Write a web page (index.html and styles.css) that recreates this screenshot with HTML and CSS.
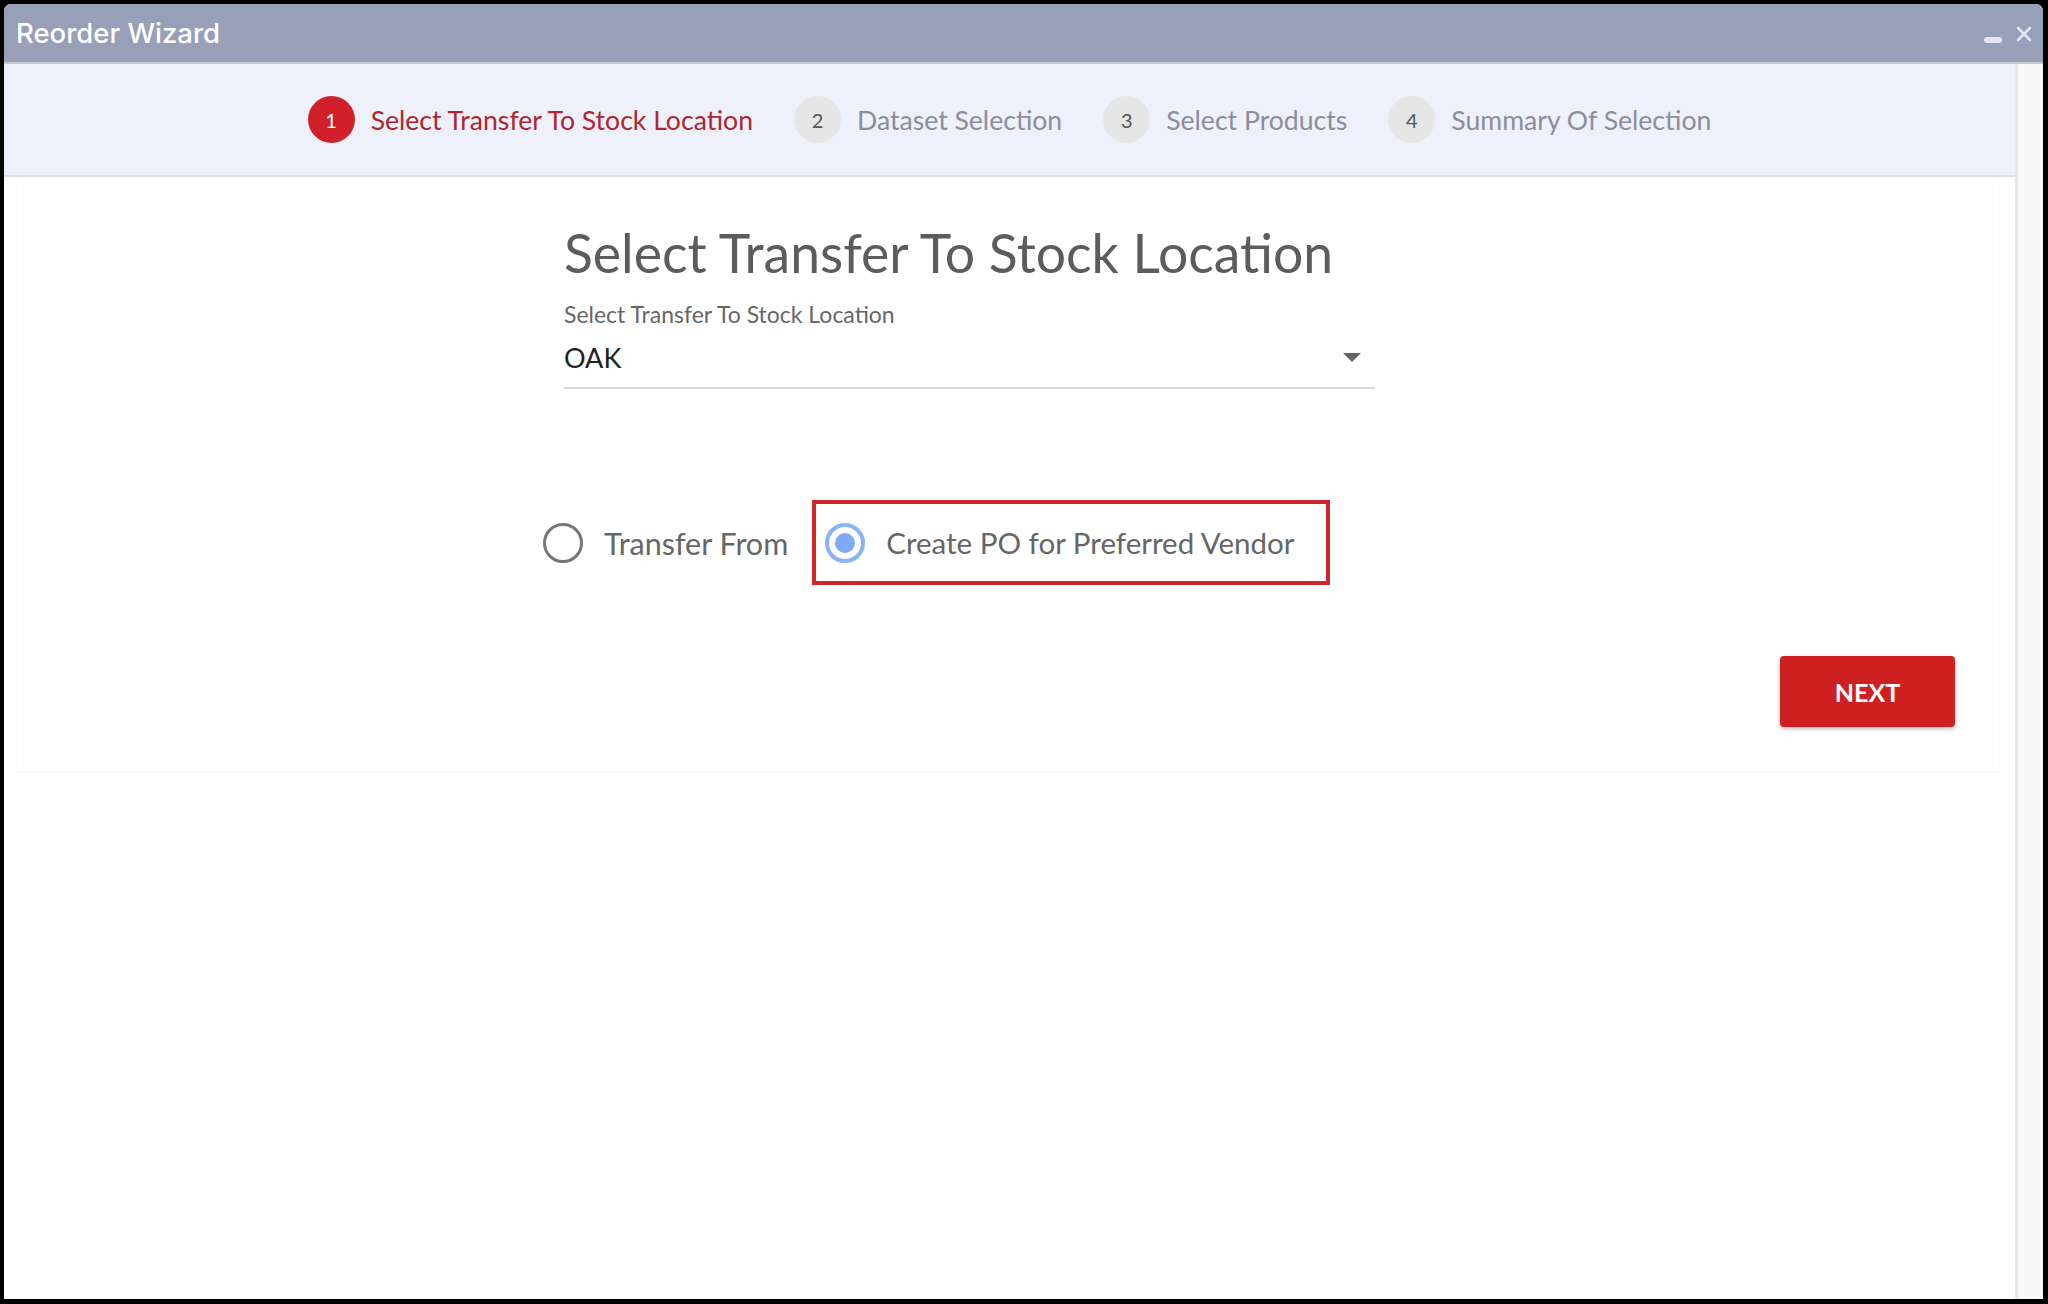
FILE: index.html
```html
<!DOCTYPE html>
<html>
<head>
<meta charset="utf-8">
<title>Reorder Wizard</title>
<link rel="stylesheet" href="styles.css">
</head>
<body>
<div class="window">
  <div class="titlebar">
    <span class="title">Reorder Wizard</span>
    <div class="controls">
      <span class="min"></span>
      <svg class="close" width="16" height="16" viewBox="0 0 16 16"><path d="M2 2 L14 14 M14 2 L2 14" stroke="#e4e7ef" stroke-width="2.6" stroke-linecap="round"/></svg>
    </div>
  </div>
  <div class="body">
    <div class="main">
      <div class="stepper">
        <div class="step active"><span class="num">1</span><span class="label">Select Transfer To Stock Location</span></div>
        <div class="step"><span class="num">2</span><span class="label">Dataset Selection</span></div>
        <div class="step"><span class="num">3</span><span class="label">Select Products</span></div>
        <div class="step"><span class="num">4</span><span class="label">Summary Of Selection</span></div>
      </div>
      <div class="card">
        <div class="form">
          <h1 class="heading">Select Transfer To Stock Location</h1>
          <div class="field-label">Select Transfer To Stock Location</div>
          <div class="select">
            <span class="value">OAK</span>
            <span class="arrow"></span>
          </div>
        </div>
        <div class="radios">
          <label class="radio"><span class="ring"></span><span class="rtext">Transfer From</span></label>
          <label class="radio checked"><span class="ring"><span class="dot"></span></span><span class="rtext">Create PO for Preferred Vendor</span></label>
        </div>
        <div class="actions">
          <button class="next">NEXT</button>
        </div>
      </div>
    </div>
    <div class="scrollbar"></div>
  </div>
</div>
</body>
</html>
```
FILE: styles.css
```css
html, body {
  margin: 0;
  padding: 0;
  background: #000;
  width: 2048px;
  height: 1304px;
  overflow: hidden;
}
body {
  padding: 4px 4px 5px 4px;
  box-sizing: border-box;
}
.window {
  width: 2039px;
  height: 1295px;
  background: #fff;
  border-radius: 7px 7px 0 0;
  overflow: hidden;
  display: flex;
  flex-direction: column;
}
.titlebar {
  height: 58px;
  background: #98a0b9;
  border-bottom: 2px solid #c6c8cf;
  display: flex;
  align-items: center;
  justify-content: space-between;
  padding: 0 11px 0 12px;
  flex: none;
}
.title {
  font-family: Inter, "Liberation Sans", sans-serif;
  font-size: 27.5px;
  font-weight: 500;
  color: #fff;
  letter-spacing: 0;
}
.controls {
  display: flex;
  align-items: center;
  gap: 14px;
  padding-top: 2px;
}
.min {
  display: block;
  width: 18px;
  height: 6px;
  border-radius: 3px;
  background: #e4e7ef;
  margin-top: 12px;
}
.close { display: block; }
.body {
  flex: 1;
  display: flex;
  min-height: 0;
}
.main {
  flex: 1;
  display: flex;
  flex-direction: column;
}
.scrollbar {
  width: 25px;
  background: #f9f9f9;
  border-left: 3px solid #e9e9e9;
  flex: none;
}
.stepper {
  height: 111px;
  background: #eef0fb;
  border-bottom: 2px solid #dcdce2;
  display: flex;
  align-items: center;
  justify-content: center;
  gap: 41px;
  font-family: Lato, "Open Sans", sans-serif;
  flex: none;
}
.step {
  display: flex;
  align-items: center;
  gap: 16px;
}
.num {
  width: 47px;
  height: 47px;
  border-radius: 50%;
  background: #e6e6e6;
  color: #555;
  display: flex;
  align-items: center;
  justify-content: center;
  font-size: 20px;
}
.label {
  font-size: 26.6px;
  color: #8b8e9a;
}
.step.active .num {
  background: #d0202a;
  color: #fff;
}
.step.active .label { color: #b0262e; }
.card {
  font-family: Lato, "Open Sans", sans-serif;
  margin: 0 16px 0 13px;
  height: 594px;
  box-shadow: 0 1px 2px rgba(0,0,0,0.04);
}
.form {
  margin-left: 547px;
  width: 811px;
  padding-top: 39px;
}
.heading {
  margin: 0;
  font-size: 53.5px;
  font-weight: 400;
  color: #5c5c5c;
  line-height: 72px;
}
.field-label {
  font-size: 23px;
  color: #666;
  margin-top: 12px;
  line-height: 28px;
}
.select {
  display: flex;
  align-items: center;
  justify-content: space-between;
  height: 59px;
  border-bottom: 2px solid #d9d9d9;
  padding-right: 14px;
}
.value {
  font-size: 27px;
  color: #222;
}
.arrow {
  width: 0;
  height: 0;
  border-left: 9px solid transparent;
  border-right: 9px solid transparent;
  border-top: 9px solid #666;
}
.radios {
  display: flex;
  align-items: center;
  margin: 111px 0 0 526px;
  gap: 24px;
}
.radio {
  display: flex;
  align-items: center;
  gap: 21px;
  height: 79px;
  box-sizing: border-box;
}
.radio.checked {
  border: 4px solid #d0252a;
  padding: 0 31px 0 9px;
  height: 85px;
}
.ring {
  width: 40px;
  height: 40px;
  border-radius: 50%;
  border: 3px solid #777;
  box-sizing: border-box;
  display: flex;
  align-items: center;
  justify-content: center;
}
.radio.checked .ring { border-color: #8ab4f8; border-width: 4px; }
.dot {
  width: 20px;
  height: 20px;
  border-radius: 50%;
  background: #7eaaf6;
}
.rtext {
  font-size: 30.5px;
  color: #666;
}
.radio.checked .rtext { font-size: 29.5px; }
.actions {
  display: flex;
  justify-content: flex-end;
  padding-right: 44px;
  margin-top: 71px;
}
.next {
  width: 175px;
  height: 71px;
  background: #cf2021;
  color: #fff;
  border: none;
  border-radius: 4px;
  font-family: Lato, "Open Sans", sans-serif;
  font-weight: 700;
  font-size: 25px;
  box-shadow: 0 2px 4px rgba(0,0,0,0.25);
}
```
